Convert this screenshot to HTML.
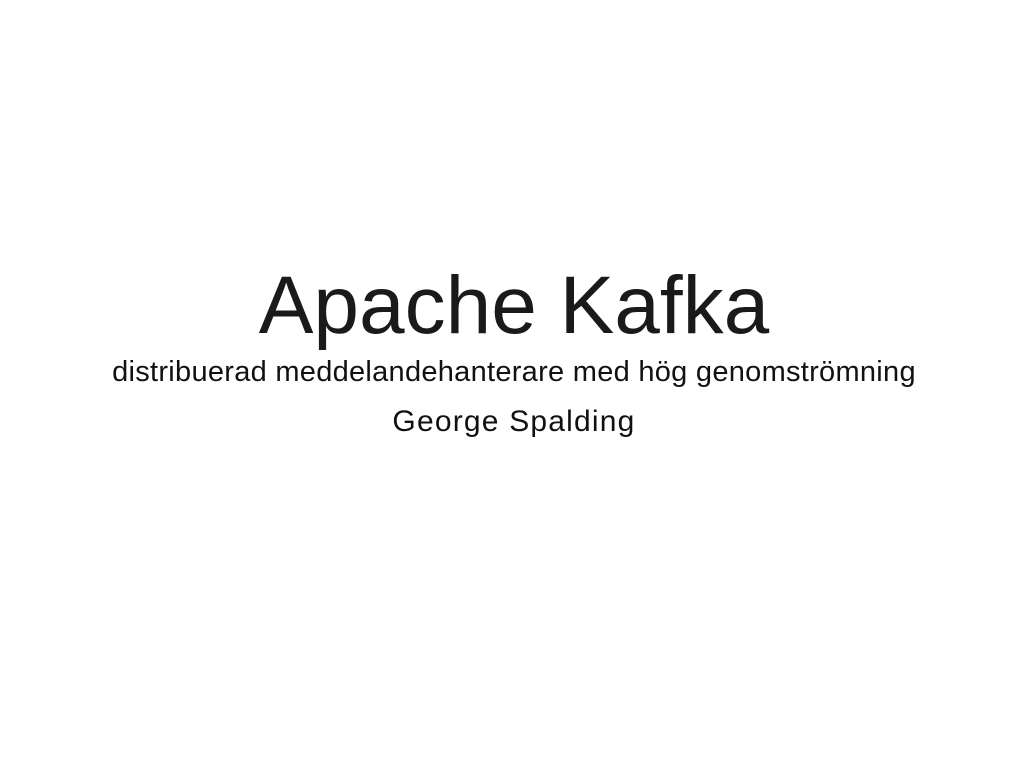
<!DOCTYPE html>
<html><head><meta charset="utf-8"><style>
html,body{margin:0;padding:0;background:#fff;width:1028px;height:772px;overflow:hidden}
div{position:absolute;left:0;width:1028px;text-align:center;font-family:"Liberation Sans",sans-serif;color:#111;line-height:1;white-space:nowrap}
.t{top:265px;font-size:82px;font-weight:300;color:#1a1a1a}
.s{top:358px;font-size:29px;letter-spacing:0.28px}
.a{top:407px;font-size:30px;letter-spacing:1.2px}
</style></head><body>
<div class="t">Apache Kafka</div>
<div class="s">distribuerad meddelandehanterare med hög genomströmning</div>
<div class="a">George Spalding</div>
</body></html>
